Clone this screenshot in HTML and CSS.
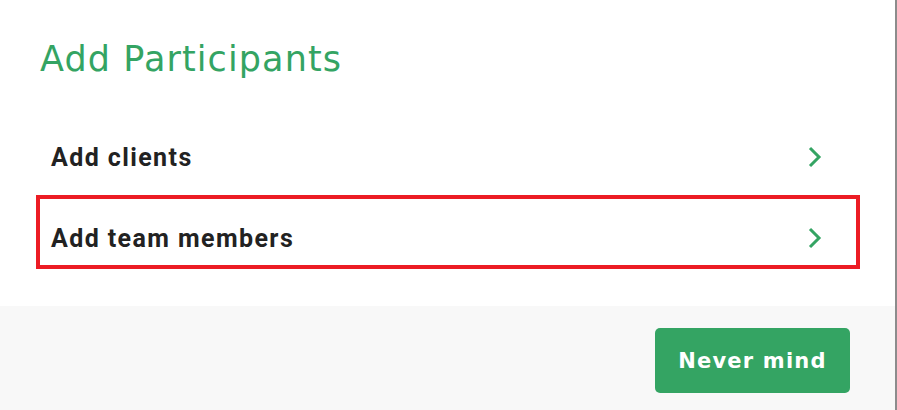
FILE: index.html
```html
<!DOCTYPE html>
<html lang="en">
<head>
    <meta charset="UTF-8">
    <title>Add Participants</title>
    <link rel="stylesheet" href="styles.css">
</head>
<body>

<div class="dialog">
    <div class="dialog-body">
        <h2 class="dialog-title">Add Participants</h2>
        <ul class="options">
            <li class="option">
                <span>Add clients</span>
                <svg class="chevron" width="14" height="22" viewBox="0 0 14 22"><polyline points="2,2 11,11 2,20" /></svg>
            </li>
            <li class="option option-selected">
                <span>Add team members</span>
                <svg class="chevron" width="14" height="22" viewBox="0 0 14 22"><polyline points="2,2 11,11 2,20" /></svg>
            </li>
        </ul>
    </div>
    <div class="dialog-footer">
        <button class="btn-cancel">Never mind</button>
    </div>
</div>

</body>
</html>
```

FILE: styles.css
```css
body {
    margin: 0;
    padding: 0;
    font-family: Roboto, "Liberation Sans", sans-serif;
    background-color: #fff;
}
.dialog {
    width: 895px;
    height: 410px;
    border-right: 2px solid #8c8c8c;
    display: flex;
    flex-direction: column;
}
.dialog-body {
    height: 306px;
    padding: 0 35px 0 36px;
    box-sizing: border-box;
}
.dialog-title {
    margin: 0;
    padding: 39px 0 0 4px;
    height: 76px;
    box-sizing: border-box;
    font-family: "DejaVu Sans", sans-serif;
    font-weight: normal;
    font-size: 35px;
    letter-spacing: 1.1px;
    line-height: 40px;
    color: #34a463;
}
.options {
    list-style: none;
    margin: 38px 0 0 0;
    padding: 0;
}
.option {
    display: flex;
    align-items: center;
    justify-content: space-between;
    height: 74px;
    box-sizing: border-box;
    border: 4px solid transparent;
    padding: 12px 34px 0 11px;
    margin-bottom: 7px;
    font-size: 25px;
    letter-spacing: 1.4px;
    font-weight: bold;
    color: #222;
}
.option-selected {
    border-color: #ec1c24;
}
.chevron polyline {
    fill: none;
    stroke: #34a463;
    stroke-width: 3;
}
.dialog-footer {
    flex: 1;
    background-color: #f8f8f8;
    display: flex;
    justify-content: flex-end;
    align-items: flex-start;
    padding: 22px 45px 0 0;
}
.btn-cancel {
    background-color: #34a463;
    color: white;
    border: none;
    border-radius: 5px;
    width: 195px;
    height: 65px;
    font-family: "DejaVu Sans", sans-serif;
    font-size: 21px;
    letter-spacing: 1.2px;
    font-weight: bold;
    cursor: pointer;
}
```
